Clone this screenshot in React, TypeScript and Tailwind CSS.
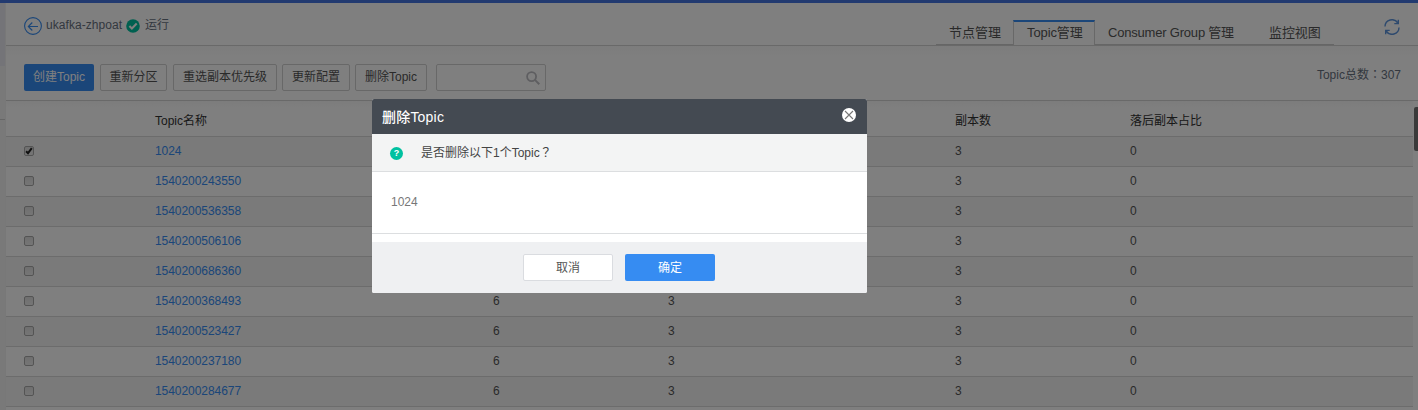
import type { ReactNode } from 'react';

const topics = [
  '1024',
  '1540200243550',
  '1540200536358',
  '1540200506106',
  '1540200686360',
  '1540200368493',
  '1540200523427',
  '1540200237180',
  '1540200284677',
];

const columns = 'grid grid-cols-[149px_338px_175px_287px_175px_1fr]';

function ToolButton({ children, className }: { children: ReactNode; className: string }) {
  return (
    <button
      className={`h-[27px] shrink-0 rounded-[2px] border border-[#d0d0d0] text-center leading-[25px] text-[#555] ${className}`}
    >
      {children}
    </button>
  );
}

function BackIcon() {
  return (
    <svg className="size-[18px]" viewBox="0 0 18 18" fill="none" stroke="#368cf2" strokeWidth="1.1">
      <circle cx="9" cy="9" r="8.4" />
      <path d="M14 9.5H4.5M8.3 5.5l-4 4 4 4" />
    </svg>
  );
}

function RunningIcon() {
  return (
    <svg className="size-[14px]" viewBox="0 0 14 14" fill="none">
      <circle cx="7" cy="7" r="6.8" fill="#00c1a0" />
      <path d="M3.4 6.9l2.5 2.5 4.8-4.8" stroke="#fff" strokeWidth="2.1" />
    </svg>
  );
}

function RefreshIcon() {
  return (
    <svg className="size-4" viewBox="0 0 16 16" fill="none" stroke="#5d94dc" strokeWidth="1.4">
      <path d="M1 7.6A7 7 0 0 1 13.9 4M14.3 .8v3.8h-4M15 8.4A7 7 0 0 1 2.1 12M1.7 15.2v-3.8h4" />
    </svg>
  );
}

function SearchIcon() {
  return (
    <svg className="size-[14px]" viewBox="0 0 14 14" fill="none" stroke="#bdbdc2" strokeWidth="1.8">
      <circle cx="5.6" cy="5.6" r="4.5" />
      <path d="M8.9 8.9l4.4 4.3" strokeWidth="2" />
    </svg>
  );
}

function Checkbox({ checked }: { checked: boolean }) {
  return (
    <span className="flex size-[10px] items-center justify-center rounded-[2px] border border-[#a8a8a8] bg-linear-to-b from-[#dedede] to-[#ececec]">
      {checked && (
        <svg className="size-2 shrink-0" viewBox="0 0 8 8" fill="none" stroke="#222" strokeWidth="2">
          <path d="M1.1 4.2l1.9 2L6.8 1.2" />
        </svg>
      )}
    </span>
  );
}

function Header() {
  return (
    <header className="flex h-[43px] border-b border-[#d2d2d2] pl-[18px] text-[#67717f]">
      <div className="flex h-[43px] w-[912px] items-center pb-px">
        <span className="pt-[3px]"><BackIcon /></span>
        <span className="ml-[4px] w-[80px] whitespace-nowrap pt-[2px] text-[12px] tracking-[0.05px]">ukafka-zhpoat</span>
        <span className="pt-[3px]"><RunningIcon /></span>
        <span className="ml-[5px] pt-px">运行</span>
      </div>
      <nav className="mt-[17px] flex h-[25px] text-[13px] leading-[26px] text-[#555]">
        <span className="w-[77px] border-b border-[#cdcdcd] pl-[13px]">节点管理</span>
        <span className="w-[82px] border-x border-t-2 border-x-[#d0d0d0] border-t-[#368cf2] pl-[13px] leading-[22px] tracking-[-0.1px]">
          Topic管理
        </span>
        <span className="w-[161px] border-b border-[#cdcdcd] pl-[13px] tracking-[-0.2px]">Consumer Group 管理</span>
        <span className="w-[78px] border-b border-[#cdcdcd] pl-[13px] tracking-[-0.1px]">监控视图</span>
      </nav>
      <span className="ml-[50px] mt-4"><RefreshIcon /></span>
    </header>
  );
}

function Toolbar() {
  return (
    <div className="flex h-[55px] items-start border-b border-[#d2d2d2] bg-linear-to-b from-[#f9f9f9] to-white to-20% pl-[18px] pr-[17px] pt-[18px]">
      <button className="mr-[6px] h-[27px] w-[70px] rounded-[2px] bg-[#368cf2] leading-[27px] text-white">
        创建Topic
      </button>
      <ToolButton className="mr-[6px] w-[67px]">重新分区</ToolButton>
      <ToolButton className="mr-[5px] w-[104px]">重选副本优先级</ToolButton>
      <ToolButton className="mr-[5px] w-[68px]">更新配置</ToolButton>
      <ToolButton className="mr-[9px] w-[72px]">删除Topic</ToolButton>
      <div className="flex h-[27px] w-[110px] items-center justify-end rounded-[2px] border border-[#d0d0d0] pr-[5px]">
        <SearchIcon />
      </div>
      <span className="ml-auto leading-5 text-[#67717f]">
        Topic总数<span className="font-['Noto_Sans_CJK_TC',sans-serif]">：</span>307
      </span>
    </div>
  );
}

function TopicTable() {
  return (
    <div className="flex justify-between">
      <div className="w-[1407px]">
        <div className={`${columns} h-9 items-center border-b border-[#d8d8d8] bg-linear-to-b from-[#f9f9f9] to-white to-20% pt-[4px] text-[#333]`}>
          <span />
          <span>Topic名称</span>
          <span />
          <span />
          <span>副本数</span>
          <span>落后副本占比</span>
        </div>
        {topics.map((topic, i) => (
          <div
            key={topic}
            className={`${columns} h-[30px] items-center border-b border-[#d8d8d8] pb-[2px] text-[#555] ${i % 2 === 0 ? 'bg-[#f4f4f4]' : 'bg-white'}`}
          >
            <span className="pl-[18px] pt-px"><Checkbox checked={i === 0} /></span>
            <span className="tracking-[-0.05px] text-[#368cf2]">{topic}</span>
            <span>6</span>
            <span>3</span>
            <span>3</span>
            <span>0</span>
          </div>
        ))}
      </div>
      <div className="mt-[6px] h-11 w-1 rounded-l-[2px] bg-[#757575]" />
    </div>
  );
}

function DeleteDialog() {
  return (
    <div role="dialog" className="mt-[99px] ml-[372px] h-[194px] w-[495px] overflow-hidden rounded-[2px] bg-white">
      <div className="flex h-[35px] items-center justify-between bg-[#444a52] pl-[10px] pr-[11px] text-[14px] font-medium text-white">
        <span className="pt-px tracking-[0.2px]">删除Topic</span>
        <svg className="mb-[3px] size-[14px]" viewBox="0 0 14 14" fill="none">
          <circle cx="7" cy="7" r="7" fill="#fff" />
          <path d="M3 3l8 8M11 3l-8 8" stroke="#777" strokeWidth="1.1" />
        </svg>
      </div>
      <div className="flex h-[38px] items-center border-b border-[#dcdee0] bg-[#f3f4f4] pl-[18px] text-[#444]">
        <span className="mt-[2px] flex size-[13px] items-center justify-center rounded-full bg-[#00c1a0] text-[9px] font-bold leading-none text-white">
          ?
        </span>
        <span className="ml-[18px]">
          是否删除以下1个Topic<span className="font-['Noto_Sans_CJK_TC',sans-serif]">？</span>
        </span>
      </div>
      <div className="flex h-[62px] items-center border-b border-[#dcdee0] pb-[2px] pl-[19px] text-[#777]">1024</div>
      <div className="mt-2 flex h-[51px] gap-3 bg-[#eff0f2] pl-[151px] pt-3">
        <button className="h-[27px] w-[90px] rounded-[2px] border border-[#dadce0] bg-white text-[#555]">取消</button>
        <button className="h-[27px] w-[90px] rounded-[2px] bg-[#368cf2] text-white">确定</button>
      </div>
    </div>
  );
}

export default function App() {
  return (
    <div className="relative h-[410px] w-[1418px] overflow-hidden bg-white font-['Liberation_Sans','Noto_Sans_CJK_SC',sans-serif] text-[12px] leading-[18px]">
      <div className="h-[3px] bg-[#4574e0]" />
      <div className="flex h-[407px]">
        <aside className="w-[6px] shrink-0 border-r border-[#f0f0f0] bg-[#f3f3f3]">
          <div className="h-[63px] bg-[#e8e9f1]" />
          <div className="h-[54px] border-b border-[#ccc]" />
        </aside>
        <main className="w-[1412px] shrink-0">
          <Header />
          <Toolbar />
          <TopicTable />
        </main>
      </div>
      <div className="absolute inset-0 bg-black/50">
        <DeleteDialog />
      </div>
    </div>
  );
}
